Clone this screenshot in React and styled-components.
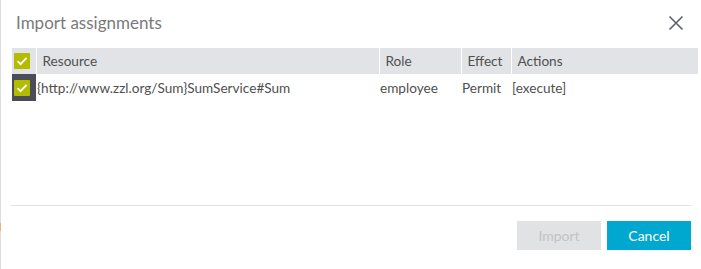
import React from "react";
import styled, { createGlobalStyle } from "styled-components";

const GlobalStyle = createGlobalStyle`
  html, body {
    margin: 0;
    padding: 0;
    background: #fff;
    font-family: Lato, "Open Sans", sans-serif;
  }
`;

const Page = styled.div`
  display: flex;
  width: 701px;
  height: 269px;
  overflow: hidden;
`;

const EdgeStrip = styled.div`
  position: relative;
  width: 1px;
  background: #dcdcdc;

  &::after {
    content: "";
    position: absolute;
    left: 0;
    top: 223px;
    width: 1px;
    height: 8px;
    background: #e9b678;
  }
`;

const Dialog = styled.div`
  flex: 1;
  display: flex;
  flex-direction: column;
  padding: 0 3px 0 11px;
`;

const TitleBar = styled.div`
  display: flex;
  align-items: center;
  justify-content: space-between;
  height: 45px;
  padding: 0 14px 3px 4px;
`;

const Title = styled.h2`
  margin: 0;
  font-size: 17px;
  font-weight: 400;
  color: #7a7a7a;
`;

const CloseButton = styled.button`
  display: flex;
  padding: 0;
  border: 0;
  background: none;
  cursor: pointer;
`;

const Grid = styled.table`
  width: 686px;
  border-collapse: collapse;
  table-layout: fixed;
  font-size: 13.6px;
  color: #505050;
`;

const HeadCell = styled.th`
  height: 26px;
  padding: 0 0 0 ${(p) => (p.$check ? 0 : 6)}px;
  background: #e1e3e6;
  border-left: ${(p) => (p.$check ? "none" : "1px solid #fff")};
  font-weight: 400;
  text-align: left;
  white-space: nowrap;
`;

const BodyCell = styled.td`
  height: 26px;
  padding: 1px 0 0 ${(p) => (p.$check ? 0 : 1)}px;
  background: ${(p) => (p.$check ? "#4b4e57" : "transparent")};
  white-space: nowrap;
`;

const CheckBox = styled.span`
  display: flex;
  align-items: center;
  justify-content: center;
  width: 16px;
  height: 16px;
  margin-left: 2px;
  background: #b4bc00;
  border-radius: 1px;
`;

const Spacer = styled.div`
  flex: 1;
`;

const Footer = styled.div`
  display: flex;
  justify-content: flex-end;
  gap: 6px;
  width: 680px;
  height: 64px;
  margin-left: -1px;
  padding-top: 15px;
  box-sizing: border-box;
  border-top: 1px solid #e2e2e2;
`;

const Button = styled.button`
  width: 84px;
  height: 29px;
  border: 0;
  font-family: inherit;
  font-size: 14px;
  color: ${(p) => (p.$primary ? "#fff" : "#c3c3c3")};
  background: ${(p) => (p.$primary ? "#00a7cf" : "#e1e2e4")};
  cursor: ${(p) => (p.$primary ? "pointer" : "default")};
`;

function Check() {
  return (
    <CheckBox>
      <svg width="12" height="10" viewBox="0 0 12 10">
        <path
          d="M1.5 5.2 L4.6 8.2 L10.5 1.8"
          fill="none"
          stroke="#fff"
          strokeWidth="1.8"
        />
      </svg>
    </CheckBox>
  );
}

const rows = [
  {
    resource: "{http://www.zzl.org/Sum}SumService#Sum",
    role: "employee",
    effect: "Permit",
    actions: "[execute]",
  },
];

export default function App() {
  return (
    <>
      <GlobalStyle />
      <Page>
        <EdgeStrip />
        <Dialog>
          <TitleBar>
            <Title>Import assignments</Title>
            <CloseButton aria-label="Close">
              <svg width="16" height="16" viewBox="0 0 16 16">
                <path
                  d="M1.5 1.5 L14.5 14.5 M14.5 1.5 L1.5 14.5"
                  stroke="#5c606b"
                  strokeWidth="1.6"
                />
              </svg>
            </CloseButton>
          </TitleBar>
          <Grid>
            <colgroup>
              <col style={{ width: 24 }} />
              <col style={{ width: 343 }} />
              <col style={{ width: 82 }} />
              <col style={{ width: 50 }} />
              <col />
            </colgroup>
            <thead>
              <tr>
                <HeadCell $check>
                  <Check />
                </HeadCell>
                <HeadCell>Resource</HeadCell>
                <HeadCell>Role</HeadCell>
                <HeadCell>Effect</HeadCell>
                <HeadCell>Actions</HeadCell>
              </tr>
            </thead>
            <tbody>
              {rows.map((r) => (
                <tr key={r.resource}>
                  <BodyCell $check>
                    <Check />
                  </BodyCell>
                  <BodyCell>{r.resource}</BodyCell>
                  <BodyCell>{r.role}</BodyCell>
                  <BodyCell>{r.effect}</BodyCell>
                  <BodyCell>{r.actions}</BodyCell>
                </tr>
              ))}
            </tbody>
          </Grid>
          <Spacer />
          <Footer>
            <Button disabled>Import</Button>
            <Button $primary>Cancel</Button>
          </Footer>
        </Dialog>
      </Page>
    </>
  );
}
